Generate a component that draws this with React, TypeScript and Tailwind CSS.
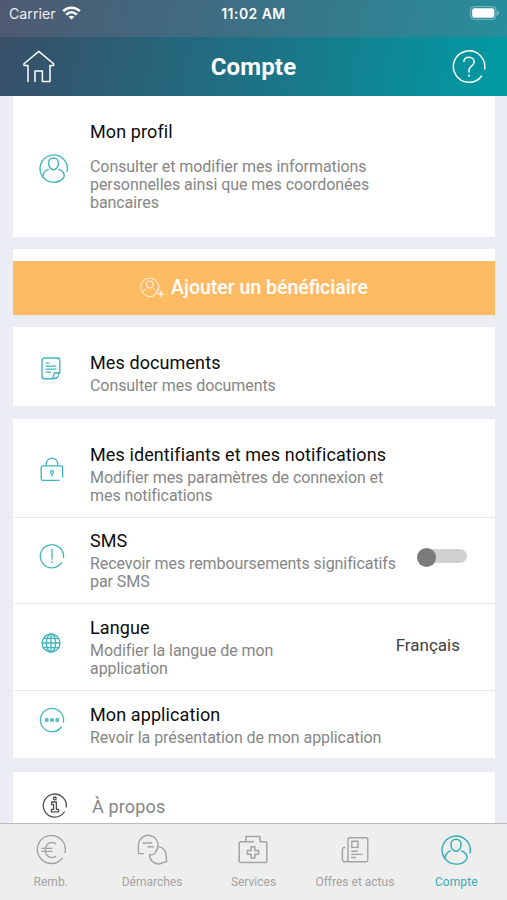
import type { ReactNode } from "react";
import clsx from "clsx";

type IconProps = { className?: string };

function HomeIcon() {
  return (
    <svg width="32" height="33" viewBox="0 0 32 33" fill="none" stroke="currentColor" strokeWidth="1.5" strokeLinecap="round" strokeLinejoin="round">
      <path d="M5 31.6V15.6H1V13.8L15.8 1.4L30.6 13.8V15.6H27V31.6H19.4V20.9H12V31.6" />
    </svg>
  );
}

function HelpIcon() {
  return (
    <svg width="34" height="34" viewBox="0 0 34 34" fill="none" stroke="currentColor" strokeWidth="1.5" strokeLinecap="round">
      <path d="M29.5 26.2A15.7 15.7 0 1 1 32.6 19" />
      <path d="M11.9 11.2C12.2 8.8 14.2 7.2 17 7.2C20 7.2 22.2 9.1 22.2 12C22.2 16.2 17 16.2 17 20.2V22" />
      <path d="M17 25.4V25.8" strokeWidth="1.9" />
    </svg>
  );
}

function ProfileIcon({ className }: IconProps) {
  return (
    <svg className={className} viewBox="0 0 30 30" fill="none" stroke="currentColor" strokeWidth="1.45" strokeLinecap="round">
      <path d="M29 17.8A14.1 14.1 0 1 0 3.9 23.6" />
      <path d="M15 4.2C11.8 4.2 9.9 6.6 9.9 9.5C9.9 13 12.4 16.3 15 16.3C17.6 16.3 20.1 13 20.1 9.5C20.1 6.6 18.2 4.2 15 4.2Z" />
      <path d="M9.5 15.9C6.3 17.1 4.2 19.8 3.9 23.6C9 30.6 20.6 31 25.4 24.6C27.3 21.4 24.8 17.4 20.5 15.9" />
    </svg>
  );
}

function AddProfileIcon() {
  return (
    <svg width="25" height="20" viewBox="0 0 25 20" fill="none" stroke="currentColor" strokeWidth="1" strokeOpacity="0.85" strokeLinecap="round">
      <path d="M18.6 10.8A9 9 0 1 0 3.2 15.2" />
      <circle cx="9.8" cy="6.4" r="3.6" />
      <path d="M18.6 10.8C18.3 12.8 17.6 14.3 16.3 15.6" />
      <path d="M6.3 10.3C4.2 11.3 3.2 12.8 3.2 15.2C6.5 19.6 13.4 19.6 16.3 15.6C16.6 12.9 15.2 11.2 13.3 10.3" />
      <path d="M21 13.3V18.5M18.4 15.9H23.6" strokeWidth="1.5" />
    </svg>
  );
}

function DocumentIcon() {
  return (
    <svg width="20" height="23" viewBox="0 0 20 23" fill="none" stroke="currentColor" strokeWidth="1.4" strokeLinecap="round" strokeLinejoin="round">
      <path d="M13 21.8H3.5A2.6 2.6 0 0 1 1 19.2V3.6A2.6 2.6 0 0 1 3.6 1H16.2A2.6 2.6 0 0 1 18.8 3.6V15.8H14.4A1.6 1.6 0 0 0 12.8 17.4C12.8 19.4 11.8 21.2 10.8 21.8M18.8 15.8L17.2 17.8M13 21.8C15 21.6 16.4 20.8 17 19.4" />
      <path d="M5 6H8M5 9.2H15M5 12.2H15M5 15.2H9.4" strokeWidth="1.25" />
    </svg>
  );
}

function LockIcon() {
  return (
    <svg width="24" height="25" viewBox="0 0 24 25" fill="none" stroke="currentColor" strokeWidth="1.3" strokeLinecap="round">
      <path d="M22.6 20V10.5A1.6 1.6 0 0 0 21 8.9H2.8A1.6 1.6 0 0 0 1.2 10.5V21.8A1.6 1.6 0 0 0 2.8 23.4H19" />
      <path d="M6.2 8.8V7A5.8 5.8 0 0 1 17.8 7V8.8" />
      <circle cx="12" cy="15.1" r="1.5" />
      <path d="M12 16.6V19.2" />
    </svg>
  );
}

function AlertIcon() {
  return (
    <svg width="26" height="26" viewBox="0 0 26 26" fill="none" stroke="currentColor" strokeWidth="1.3" strokeLinecap="round">
      <path d="M22.6 19.7A11.6 11.6 0 1 1 24.5 14.4" />
      <path d="M13 6.5V16" />
      <path d="M13 19V19.4" strokeWidth="1.5" />
    </svg>
  );
}

function GlobeIcon() {
  return (
    <svg width="20" height="20" viewBox="0 0 20 20" fill="none" stroke="currentColor" strokeWidth="1.4">
      <circle cx="10" cy="10" r="9" />
      <ellipse cx="10" cy="10" rx="4.6" ry="9" />
      <path d="M10 1V19M1 10H19M2.3 5.4H17.7M2.3 14.6H17.7" />
    </svg>
  );
}

function DotsIcon() {
  return (
    <svg width="26" height="26" viewBox="0 0 26 26" fill="none" stroke="currentColor" strokeWidth="1.3" strokeLinecap="round">
      <path d="M22.3 20A11.6 11.6 0 1 1 24.4 15.2" />
      <g fill="currentColor" fillOpacity="0.55">
        <circle cx="7.7" cy="13" r="1.4" />
        <circle cx="13" cy="13" r="1.4" />
        <circle cx="18.3" cy="13" r="1.4" />
      </g>
    </svg>
  );
}

function InfoIcon() {
  return (
    <svg width="26" height="26" viewBox="0 0 26 26" fill="none" stroke="currentColor" strokeWidth="1.3" strokeLinecap="round" strokeLinejoin="round">
      <path d="M22.3 20A11.5 11.5 0 1 1 24.2 15" />
      <circle cx="12.8" cy="6.4" r="1.4" />
      <path d="M9.6 10H14.4V17.4H16.6V19.8H9.4V17.4H11.6V12.6H9.6Z" />
    </svg>
  );
}

function EuroIcon() {
  return (
    <svg width="30" height="30" viewBox="0 0 30 30" fill="none" stroke="currentColor" strokeWidth="1.4" strokeLinecap="round">
      <path d="M26.3 23.2A14 14 0 1 1 29 17.6" />
      <path d="M19.6 8.6C14.8 5.6 9.4 8.8 9.4 15C9.4 21.2 14.8 24.4 19.6 21.4" />
      <path d="M6 13.4H15.8M6 16.4H15.8" />
    </svg>
  );
}

function ChatIcon() {
  return (
    <svg width="31" height="31" viewBox="0 0 31 31" fill="none" stroke="currentColor" strokeWidth="1.4" strokeLinecap="round" strokeLinejoin="round">
      <path d="M6.6 19.6H1.4V11A9.8 9.8 0 1 1 18.9 17.2" />
      <path d="M6 9H14.6M10.8 12.8H16.2" />
      <path d="M21.4 12.6A8.6 8.6 0 0 1 29.2 21.4L29.6 27.8L26.4 28.4A8.9 8.9 0 0 1 12.6 20.6C15.2 21.2 18 19.8 18.9 17.2" />
    </svg>
  );
}

function KitIcon() {
  return (
    <svg width="30" height="30" viewBox="0 0 30 30" fill="none" stroke="currentColor" strokeWidth="1.5" strokeLinejoin="round">
      <path d="M8 6.8V1.6H22V6.8H27.2A1.6 1.6 0 0 1 28.8 8.4V26A1.6 1.6 0 0 1 27.2 27.6H2.8A1.6 1.6 0 0 1 1.2 26V8.4A1.6 1.6 0 0 1 2.8 6.8H16" />
      <path d="M13.1 11.7H16.9V15.4H20.6V19.2H16.9V22.9H13.1V19.2H9.4V15.4H13.1Z" />
    </svg>
  );
}

function NewsIcon() {
  return (
    <svg width="28" height="28" viewBox="0 0 28 28" fill="none" stroke="currentColor" strokeWidth="1.4" strokeLinecap="round" strokeLinejoin="round">
      <path d="M4.2 25.8A2.7 2.7 0 0 0 7 23.2V3.5A1.8 1.8 0 0 1 8.8 1.7H25A1.8 1.8 0 0 1 26.8 3.5V24A1.8 1.8 0 0 1 25 25.8H4.2A2.6 2.6 0 0 1 1.4 23.2V13.6A2.4 2.4 0 0 1 3.8 11.2" />
      <path d="M10.8 5.2H17V11.4H10.8ZM10.8 15.3H16.4M10.8 18.4H20.8M10.8 21.5H14.4" />
    </svg>
  );
}

function WifiIcon() {
  return (
    <svg width="19" height="14" viewBox="0 0 19 14" fill="none" stroke="currentColor" strokeWidth="2.6">
      <path d="M1.2 5.2C5.8 0.5 13.2 0.5 17.8 5.2" />
      <path d="M4.2 8.6C7.3 5.6 11.7 5.6 14.8 8.6" />
      <path d="M9.5 13.6L6.6 10.7C8.3 9.4 10.7 9.4 12.4 10.7Z" fill="currentColor" stroke="none" />
    </svg>
  );
}

function BatteryIcon() {
  return (
    <svg width="31" height="14" viewBox="0 0 31 14" fill="none">
      <rect x="1.6" y="0.6" width="25.4" height="12.8" rx="3.6" stroke="white" strokeOpacity="0.4" />
      <rect x="3.2" y="2.2" width="22.2" height="9.6" rx="2" fill="white" />
      <path d="M28.4 4.8V9.4C30.3 8.5 30.3 5.7 28.4 4.8Z" fill="white" fillOpacity="0.5" />
    </svg>
  );
}

type RowProps = {
  icon: ReactNode;
  title: string;
  lines: string[];
  className: string;
  iconClassName: string;
  children?: ReactNode;
};

function Row({ icon, title, lines, className, iconClassName, children }: RowProps) {
  return (
    <div className={clsx("flex items-start", className)}>
      <div className={clsx("flex w-[77px] shrink-0 justify-center text-[#41b5bb]", iconClassName)}>{icon}</div>
      <div className="whitespace-nowrap">
        <h2 className="text-[18px] leading-[22px] tracking-[0.1px] text-[#0c0c0c]">{title}</h2>
        <p className="mt-[3px] text-[16px] leading-[18.2px] tracking-[-0.07px] text-[#868686]">
          {lines.map((line) => (
            <span key={line} className="block">{line}</span>
          ))}
        </p>
      </div>
      {children}
    </div>
  );
}

const tabs = [
  { label: "Remb.", icon: <EuroIcon /> },
  { label: "Démarches", icon: <ChatIcon /> },
  { label: "Services", icon: <KitIcon /> },
  { label: "Offres et actus", icon: <NewsIcon /> },
  { label: "Compte", icon: <ProfileIcon className="size-[30px]" />, active: true },
];

export default function App() {
  return (
    <div className="flex h-[900px] w-[507px] flex-col overflow-hidden bg-[#ebedf4] font-['Roboto',sans-serif]">
      <header className="h-24 shrink-0 bg-linear-[100deg] from-[#384e66] via-[#1e7185] to-[#009ca4] text-white">
        <div className="grid h-[37px] grid-cols-3 bg-[#80758a]/30 px-[9px] pt-[5px] font-['Inter',sans-serif] text-[14.2px] leading-[18px]">
          <div className="flex gap-1.5">
            <span className="text-white/90">Carrier</span>
            <span className="mt-px"><WifiIcon /></span>
          </div>
          <div className="text-center text-[14px] font-semibold tracking-[0.45px] whitespace-nowrap">11:02 AM</div>
          <div className="mt-[1px] -mr-[2px] flex justify-end"><BatteryIcon /></div>
        </div>
        <div className="flex h-[59px] items-center justify-between pr-[21px] pl-[23px]">
          <HomeIcon />
          <h1 className="mt-px text-[24px] font-bold tracking-[0.15px]">Compte</h1>
          <HelpIcon />
        </div>
      </header>

      <main className="flex min-h-0 flex-1 flex-col overflow-hidden pr-3 pl-[13px]">
        <section className="h-[141px] shrink-0 bg-white">
          <div className="flex pt-[25px]">
            <div className="flex w-[77px] justify-center pt-[33px] pl-1 text-[#41b5bb]">
              <ProfileIcon className="size-[29px]" />
            </div>
            <div>
              <h2 className="text-[18px] leading-[22px] tracking-[0.1px] text-[#0c0c0c]">Mon profil</h2>
              <p className="mt-[15px] text-[16px] leading-[18.2px] tracking-[-0.07px] whitespace-nowrap text-[#868686]">
                Consulter et modifier mes informations
                <br />
                personnelles ainsi que mes coordonées
                <br />
                bancaires
              </p>
            </div>
          </div>
        </section>

        <section className="mt-3 shrink-0 bg-white pt-3">
          <button type="button" className="flex h-[54px] w-full items-center justify-center gap-1.5 bg-[#ffbb63] text-white">
            <AddProfileIcon />
            <span className="text-[19.5px] font-medium">Ajouter un bénéficiaire</span>
          </button>
        </section>

        <section className="mt-3 shrink-0 bg-white">
          <Row className="h-[79px] pt-[25px]" iconClassName="pt-[5px] pr-px" icon={<DocumentIcon />} title="Mes documents" lines={["Consulter mes documents"]} />
        </section>

        <section className="mt-[13px] shrink-0 divide-y divide-[#e6e8ea] bg-white">
          <Row
            className="h-[99px] pt-[25px]"
            iconClassName="pt-[13px]"
            icon={<LockIcon />}
            title="Mes identifiants et mes notifications"
            lines={["Modifier mes paramètres de connexion et", "mes notifications"]}
          />
          <Row
            className="h-[86px] pt-[12px]"
            iconClassName="pt-[13px]"
            icon={<AlertIcon />}
            title="SMS"
            lines={["Recevoir mes remboursements significatifs", "par SMS"]}
          >
            <button type="button" role="switch" aria-checked="false" aria-label="SMS" className="mt-[17px] mr-7 ml-auto flex h-5 w-[50px] items-center">
              <span className="z-10 size-[19px] shrink-0 rounded-full bg-[#7b7b7b]" />
              <span className="-ml-[15px] h-[14px] flex-1 -translate-y-px rounded-full bg-[#d1d1d1]" />
            </button>
          </Row>
          <Row
            className="h-[87px] pt-[13px]"
            iconClassName="pt-[16px] pr-px"
            icon={<GlobeIcon />}
            title="Langue"
            lines={["Modifier la langue de mon", "application"]}
          >
            <span className="mt-[17px] mr-[35px] ml-auto text-[17px] leading-[22px] text-[#414141]">Français</span>
          </Row>
          <Row
            className="h-[67px] pt-[13px]"
            iconClassName="pt-[3px]"
            icon={<DotsIcon />}
            title="Mon application"
            lines={["Revoir la présentation de mon application"]}
          />
        </section>

        <section className="mt-[14px] flex h-20 shrink-0 items-start bg-white pt-5 pl-[29px] text-[#505050]">
          <InfoIcon />
          <h2 className="mt-1 ml-6 text-[18px] leading-[22px] tracking-[0.15px] text-[#858585]">À propos</h2>
        </section>
      </main>

      <nav className="grid h-[77px] shrink-0 grid-cols-5 border-t border-[#bcbcbc] bg-[#eee]">
        {tabs.map((tab) => (
          <a key={tab.label} className={clsx("flex flex-col items-center pt-[10px] whitespace-nowrap", tab.active ? "text-[#35afb5]" : "text-[#a3a3a3]")}>
            <span className="flex h-[31px] items-center">{tab.icon}</span>
            <span className={clsx("mt-[9px] text-[12px] leading-4", tab.active && "tracking-[0.1px]")}>{tab.label}</span>
          </a>
        ))}
      </nav>
    </div>
  );
}
